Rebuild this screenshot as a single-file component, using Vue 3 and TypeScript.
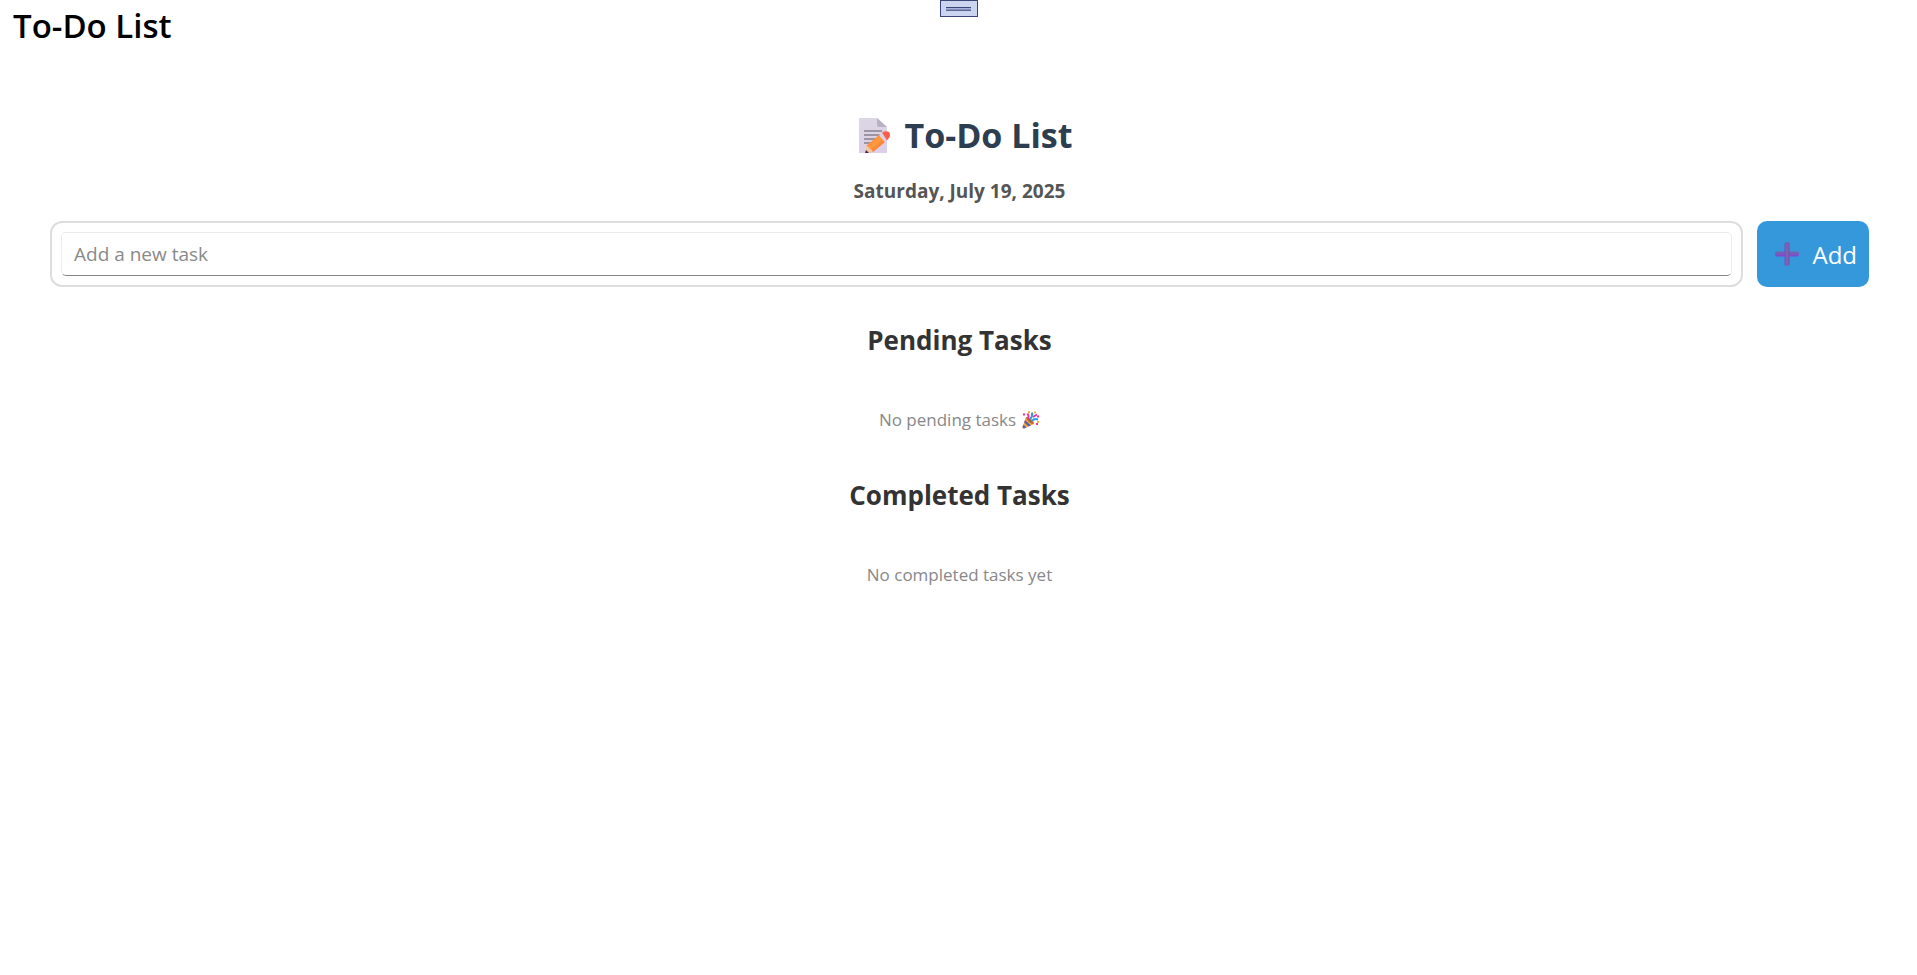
<script setup lang="ts">
import { computed, ref } from 'vue'

interface Task {
  id: number
  title: string
  done: boolean
}

const draft = ref('')
const tasks = ref<Task[]>([])
const pending = computed(() => tasks.value.filter((task) => !task.done))
const completed = computed(() => tasks.value.filter((task) => task.done))

function addTask(): void {
  const title = draft.value.trim()
  if (!title) return
  tasks.value.push({ id: Date.now(), title, done: false })
  draft.value = ''
}
</script>

<template>
  <div class="window">
    <button class="toolbar-handle" type="button" aria-label="Toggle toolbar">
      <svg width="25" height="4" viewBox="0 0 25 4" aria-hidden="true">
        <rect width="25" height="1" fill="#3a4675" />
        <rect y="1" width="25" height="1" fill="#a6b2dc" />
        <rect y="2" width="25" height="1" fill="#8793bc" />
        <rect y="3" width="25" height="1" fill="#5c6891" />
      </svg>
    </button>
    <header class="app-bar">To-Do List</header>

    <main class="content">
      <h1 class="title">
        <svg class="memo" width="36" height="36" viewBox="0 0 36 36" aria-hidden="true">
          <defs>
            <linearGradient id="paper" x1="0" y1="0" x2="0" y2="1">
              <stop offset="0" stop-color="#dcd7e4" />
              <stop offset="1" stop-color="#dccfe6" />
            </linearGradient>
            <linearGradient id="pencil" x1="0" y1="0" x2="1" y2="1">
              <stop offset="0" stop-color="#ff7a3d" />
              <stop offset="0.5" stop-color="#ff9a3d" />
              <stop offset="1" stop-color="#f4552f" />
            </linearGradient>
          </defs>
          <path d="M2 1h18l10 9v26H2z" fill="url(#paper)" />
          <path d="M20 1l10 9h-8q-2 0-2-2z" fill="#b9b0c4" />
          <path d="M7 14h18M7 18h18M7 22h13M7 26h8" stroke="#85808f" stroke-width="1.300" />
          <path d="M8 36l2-8 6 7-4 1z" fill="#f1c79d" />
          <path d="M8 36l1-3 3 3z" fill="#4c2946" />
          <path d="M9 29L22 18l6 7-12 10q-1-3-3-3-1-3-4-3z" fill="url(#pencil)" />
          <path d="M22 18l3-2.500 6 7L28 25z" fill="#dcd2e6" />
          <path d="M25 15.500q4-2 7-.5 2 3 0 6L30 23.500z" fill="#ff5d4b" />
        </svg>
        <span>To-Do List</span>
      </h1>
      <p class="date">Saturday, July 19, 2025</p>

      <form class="entry" @submit.prevent="addTask">
        <div class="field">
          <input v-model="draft" type="text" placeholder="Add a new task" aria-label="Add a new task" />
        </div>
        <button class="add" type="submit">
          <svg width="26" height="26" viewBox="0 0 26 26" aria-hidden="true">
            <defs>
              <linearGradient id="bar" x1="0" y1="0" x2="0" y2="1">
                <stop offset="0" stop-color="#7663a9" />
                <stop offset="0.5" stop-color="#765bbb" />
                <stop offset="1" stop-color="#873ee0" />
              </linearGradient>
              <linearGradient id="post" x1="0" y1="0" x2="1" y2="0">
                <stop offset="0" stop-color="#794ac4" />
                <stop offset="0.5" stop-color="#7c68b9" />
                <stop offset="1" stop-color="#6b53a8" />
              </linearGradient>
            </defs>
            <rect x="1" y="10.500" width="24" height="5" rx="2" fill="url(#bar)" />
            <rect x="10.500" y="1" width="5" height="24" rx="2" fill="url(#post)" />
          </svg>
          <span>Add</span>
        </button>
      </form>

      <section>
        <h2>Pending Tasks</h2>
        <ul v-if="pending.length" class="tasks">
          <li v-for="task in pending" :key="task.id">
            <label><input v-model="task.done" type="checkbox" /> {{ task.title }}</label>
          </li>
        </ul>
        <p v-else class="empty">
          <span>No pending tasks</span>
          <svg width="18" height="18" viewBox="0 0 18 18" aria-hidden="true">
            <path d="M4 6l8 7-10 4.500q-2 .5-1.500-1.500z" fill="#f5a83c" />
            <path d="M3 9l6 5.500-2.500 1L2.200 11.500zM1.300 13.500l3.200 3-2.500 1-1.500-1z" fill="#5a5eae" />
            <path d="M4 6q3 0 5.500 2.500T12 13q-3 0-5.500-2.500T4 6z" fill="#b4643a" />
            <path d="M5.500 8q2-2 0-5.500" fill="none" stroke="#f52f9b" stroke-width="2" />
            <path d="M8 8q3-3 2-6.500M10 10q2-3 6-1.500" fill="none" stroke="#2d9de4" stroke-width="2" />
            <path d="M11 6l4-2.500" stroke="#f52f9b" stroke-width="2" />
            <path d="M1 3.500h2M15 5.500h2M14 13h2" stroke="#f52f9b" stroke-width="2" />
            <path d="M6 1h2M12 1.500h2M15 11h2" stroke="#ffb02e" stroke-width="2" />
          </svg>
        </p>
      </section>

      <section>
        <h2>Completed Tasks</h2>
        <ul v-if="completed.length" class="tasks">
          <li v-for="task in completed" :key="task.id">
            <label><input v-model="task.done" type="checkbox" /> {{ task.title }}</label>
          </li>
        </ul>
        <p v-else class="empty">No completed tasks yet</p>
      </section>
    </main>
  </div>
</template>

<style>
body {
  margin: 0;
  background: #fff;
}
</style>

<style scoped>
.window {
  position: relative;
  font-family: "Open Sans", "Noto Sans", sans-serif;
}

.toolbar-handle {
  position: absolute;
  top: 0;
  left: 50%;
  transform: translateX(-50%);
  display: flex;
  align-items: center;
  justify-content: center;
  box-sizing: border-box;
  width: 38px;
  height: 17px;
  padding: 0;
  border: 1px solid #3a4675;
  background: #ccd5f0;
}

.app-bar {
  padding: 0 13px;
  font-size: 33px;
  font-weight: 600;
  line-height: 52px;
  color: #000;
}

.content {
  padding: 55px 48px 0 50px;
  text-align: center;
}

.title {
  display: flex;
  align-items: center;
  justify-content: center;
  gap: 12px;
  margin: 0;
  padding-left: 10px;
  font-size: 34px;
  font-weight: 700;
  line-height: 56px;
  color: #2c3e50;
}

.date {
  margin: 13px 0 15px;
  font-size: 19px;
  font-weight: 700;
  line-height: 30px;
  color: #555;
}

.entry {
  display: flex;
  gap: 14px;
}

.field {
  flex: 1;
  box-sizing: border-box;
  height: 66px;
  padding: 9px;
  border: 2px solid #ddd;
  border-radius: 12px;
}

.field input {
  display: block;
  box-sizing: border-box;
  width: 100%;
  height: 44px;
  padding: 0 12px;
  border: 1px solid #ececec;
  border-bottom-color: #868686;
  border-radius: 5px;
  outline: none;
  background: #fff;
  font: inherit;
  font-size: 19px;
  color: #222;
}

.field input::placeholder {
  color: #8a8a8a;
  opacity: 1;
}

.add {
  display: flex;
  align-items: center;
  justify-content: flex-end;
  gap: 12px;
  width: 112px;
  padding: 0 12px;
  border: 0;
  border-radius: 10px;
  background: #3498db;
  font: inherit;
  font-size: 24px;
  color: #fff;
}

h2 {
  margin: 34px 0 0;
  font-size: 26px;
  font-weight: 700;
  line-height: 38px;
  color: #333;
}

.empty {
  display: flex;
  align-items: center;
  justify-content: center;
  gap: 6px;
  margin: 43px 0 0;
  font-size: 17px;
  line-height: 35px;
  color: #888;
}

.tasks {
  margin: 43px 0 0;
  padding: 0;
  list-style: none;
  font-size: 17px;
  line-height: 35px;
}

section + section {
  padding-top: 5px;
}
</style>
